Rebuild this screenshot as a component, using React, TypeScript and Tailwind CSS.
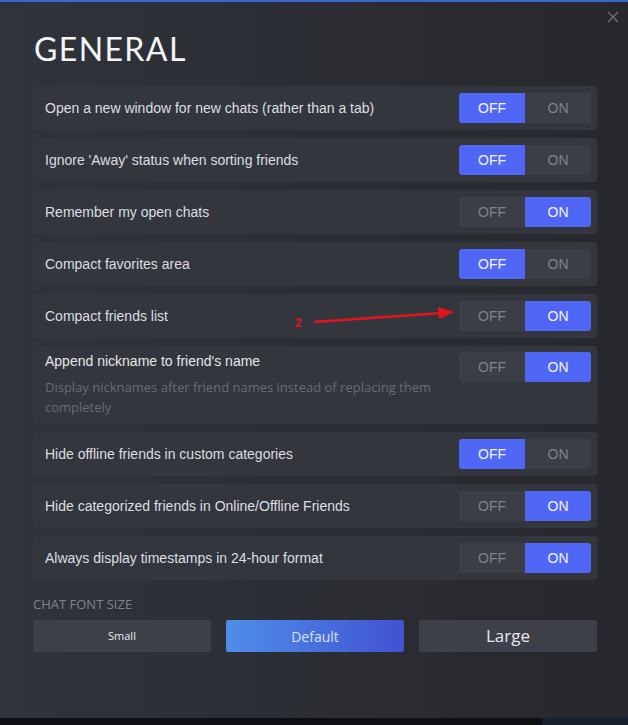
const rowFont = { fontFamily: '"Liberation Sans", Arial, sans-serif' };
const uiFont = { fontFamily: '"Open Sans", "Noto Sans", sans-serif' };

interface Setting {
  label: string;
  on: boolean;
  description?: string;
}

const settings: Setting[] = [
  { label: 'Open a new window for new chats (rather than a tab)', on: false },
  { label: "Ignore 'Away' status when sorting friends", on: false },
  { label: 'Remember my open chats', on: true },
  { label: 'Compact favorites area', on: false },
  { label: 'Compact friends list', on: true },
  {
    label: "Append nickname to friend's name",
    on: true,
    description: 'Display nicknames after friend names instead of replacing them completely',
  },
  { label: 'Hide offline friends in custom categories', on: false },
  { label: 'Hide categorized friends in Online/Offline Friends', on: true },
  { label: 'Always display timestamps in 24-hour format', on: true },
];

function Toggle({ on }: { on: boolean }) {
  return (
    <div className="flex h-[30px] w-[132px] shrink-0 overflow-hidden rounded-[3px] bg-[#3b3e46] text-[14px]" style={rowFont}>
      <div
        className={
          'flex w-1/2 items-center justify-center ' +
          (on ? 'text-[#7f838b]' : 'bg-[#5066f5] text-[#f2f4ff]')
        }
      >
        OFF
      </div>
      <div
        className={
          'flex w-1/2 items-center justify-center ' +
          (on ? 'bg-[#5066f5] text-[#f2f4ff]' : 'text-[#7f838b]')
        }
      >
        ON
      </div>
    </div>
  );
}

function SettingRow({ setting }: { setting: Setting }) {
  if (setting.description) {
    return (
      <div className="flex h-[78px] items-start justify-between rounded-[3px] bg-[#33363d] py-[6px] pl-3 pr-[6px]">
        <div>
          <div className="text-[14px] leading-[18px] text-[#e4e6e8]" style={rowFont}>
            {setting.label}
          </div>
          <div className="mt-[7px] w-[400px] text-[13px] leading-[20px] text-[#686c74]" style={uiFont}>
            {setting.description}
          </div>
        </div>
        <Toggle on={setting.on} />
      </div>
    );
  }
  return (
    <div className="flex h-[44px] items-center justify-between rounded-[3px] bg-[#33363d] pl-3 pr-[6px]">
      <span className="text-[14px] text-[#dcdee1]" style={rowFont}>
        {setting.label}
      </span>
      <Toggle on={setting.on} />
    </div>
  );
}

export default function App() {
  return (
    <div className="relative h-[725px] w-[628px] overflow-hidden bg-[#0f1013]">
      <div className="relative h-[718px] border-t-2 border-[#3a66d4] bg-gradient-to-r from-[#30333a] to-[#26282d] pl-[33px] pr-[31px]">
        <button className="absolute right-[9px] top-[9px] text-[#6e7178]">
          <svg width="12" height="12" viewBox="0 0 12 12" fill="none" stroke="currentColor" strokeWidth="1.2">
            <path d="M1 1 L11 11 M11 1 L1 11" />
          </svg>
        </button>

        <h1
          className="pl-[1px] pt-[27px] text-[32px] font-normal leading-[40px] tracking-[1.4px] text-[#f4f5f7]"
          style={{ fontFamily: 'Lato, "Noto Sans", sans-serif' }}
        >
          GENERAL
        </h1>

        <div className="mt-[17px] flex flex-col gap-2">
          {settings.map((s) => (
            <SettingRow key={s.label} setting={s} />
          ))}
        </div>

        <div className="mt-[16px] text-[13px] leading-[16px] text-[#7f838b]" style={uiFont}>
          CHAT FONT SIZE
        </div>
        <div className="mt-2 grid grid-cols-3 gap-[15px]" style={uiFont}>
          <button className="h-[32px] rounded-[2px] bg-[#3d4049] text-[11px] text-[#e6e8ec]">Small</button>
          <button className="h-[32px] rounded-[2px] bg-gradient-to-r from-[#4f8ee9] to-[#4251d2] text-[14px] text-[#d6e0fa]">
            Default
          </button>
          <button className="h-[32px] rounded-[2px] bg-[#3d4049] text-[17px] text-[#e6e8ec]">Large</button>
        </div>
      </div>

      <div className="absolute bottom-0 right-0 h-[7px] w-[86px] bg-[#16202c]" />

      <svg className="pointer-events-none absolute left-0 top-0" width="628" height="725">
        <line x1="314" y1="322" x2="442" y2="313" stroke="#e3151b" strokeWidth="2.5" />
        <polygon points="438,307 454,312 439,319" fill="#e3151b" />
      </svg>
      <span
        className="absolute left-[295px] top-[314px] text-[12px] font-bold text-[#e3151b]"
        style={rowFont}
      >
        2
      </span>
    </div>
  );
}
